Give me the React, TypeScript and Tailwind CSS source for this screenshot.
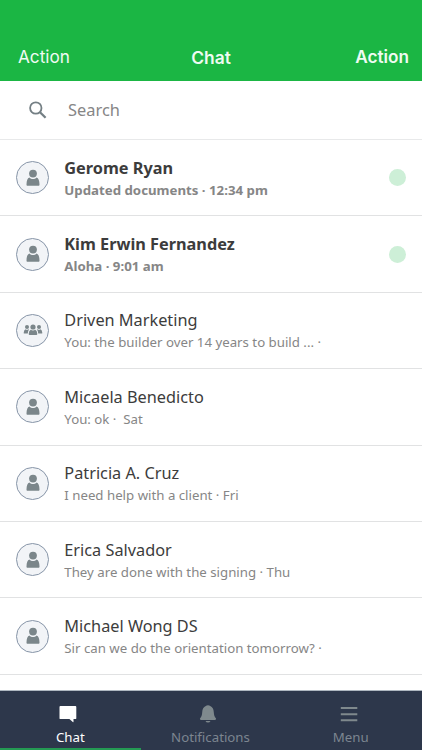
import clsx from "clsx";

interface Conversation {
  name: string;
  preview: string;
  group?: boolean;
  unread?: boolean;
}

const conversations: Conversation[] = [
  { name: "Gerome Ryan", preview: "Updated documents · 12:34 pm", unread: true },
  { name: "Kim Erwin Fernandez", preview: "Aloha · 9:01 am", unread: true },
  {
    name: "Driven Marketing",
    preview: "You: the builder over 14 years to build ... ·",
    group: true,
  },
  { name: "Micaela Benedicto", preview: "You: ok ·  Sat" },
  { name: "Patricia A. Cruz", preview: "I need help with a client · Fri" },
  { name: "Erica Salvador", preview: "They are done with the signing · Thu" },
  { name: "Michael Wong DS", preview: "Sir can we do the orientation tomorrow? ·" },
];

function PersonIcon() {
  return (
    <svg width="14" height="18" viewBox="0 0 14 18" fill="#7b868a">
      <circle cx="7" cy="4.600" r="3.900" />
      <path d="M3.400 8.400C4.500 9.600 5.600 10 7 10s2.500-.4 3.600-1.600c1.900.7 2.800 3.100 2.900 7 0 1-.4 1.400-1.200 1.400H1.700c-.8 0-1.200-.4-1.200-1.400.1-3.900 1-6.300 2.900-7z" />
    </svg>
  );
}

function GroupIcon() {
  return (
    <svg width="20" height="12" viewBox="0 0 20 12" fill="#7b868a">
      <circle cx="4" cy="3" r="2" />
      <circle cx="16" cy="3" r="2" />
      <path d="M2.400 5.300Q4 6.400 5.600 5.300L6 5.600Q4.900 7 4.800 9.600H1.400Q.6 9.600.7 8.700 .9 6 2.400 5.300z" />
      <path d="M17.600 5.300Q16 6.400 14.400 5.300L14 5.600Q15.100 7 15.200 9.600H18.600Q19.400 9.600 19.300 8.700 19.100 6 17.600 5.300z" />
      <circle cx="10" cy="3" r="2.600" />
      <path d="M7.700 5.800Q10 7.400 12.300 5.800 14.200 6.600 14.300 9.900 14.300 11 13.300 11H6.700Q5.700 11 5.700 9.900 5.800 6.600 7.700 5.800z" />
    </svg>
  );
}

function SearchIcon() {
  return (
    <svg width="18" height="18" viewBox="0 0 18 18" fill="none" stroke="#747f84">
      <circle cx="6.800" cy="7" r="5.700" strokeWidth="1.800" />
      <path d="M11 11.200l5.600 5.500" strokeWidth="2.300" />
    </svg>
  );
}

function ChatIcon() {
  return (
    <svg width="18" height="18" viewBox="0 0 18 18" fill="#fff">
      <path d="M1.400 1h15q.9 0 .9.900v11.300q0 .9-.9.900h-1.900v2.600q0 .8-.7.300l-3.400-2.900h-9q-.9 0-.9-.9V1.900q0-.9.900-.9z" />
    </svg>
  );
}

function BellIcon() {
  return (
    <svg width="18" height="18" viewBox="0 0 18 18" fill="#7f898d">
      <path d="M9 .3c1 0 1.700.3 2.200.8 2.300.9 3.400 3 3.600 6.100.2 3 .7 4.300 1.900 5.700.8.900.3 2-.9 2H2.200c-1.200 0-1.700-1.100-.9-2 1.200-1.400 1.700-2.700 1.900-5.700.2-3.100 1.300-5.200 3.600-6.100C7.300.6 8 .3 9 .3z" />
      <path d="M6.500 16h5q-.7 1.600-2.500 1.600T6.500 16z" />
    </svg>
  );
}

function MenuIcon() {
  return (
    <svg width="18" height="18" viewBox="0 0 18 18" stroke="#7f898d" strokeWidth="1.900">
      <path d="M.8 3h16.500M.8 9.200h16.500M.8 15.300h16.500" />
    </svg>
  );
}

function ConversationRow({ name, preview, group, unread }: Conversation) {
  return (
    <li className="flex h-[76.4px] items-center border-b border-[#e1e2e3] px-4">
      <div className="flex size-[33px] shrink-0 items-center justify-center rounded-full border border-[#8795a8] bg-[#f2f4f7]">
        {group ? <GroupIcon /> : <PersonIcon />}
      </div>
      <div className="ml-[15.300px] min-w-0 flex-1 pt-[2px]">
        <p
          className={clsx(
            "text-[16.300px] leading-[22px] whitespace-pre text-[#3c3c3c]",
            unread && "font-bold"
          )}
        >
          {name}
        </p>
        <p
          className={clsx(
            "text-[13.250px] leading-[22px] whitespace-pre text-[#868686]",
            unread && "font-bold"
          )}
        >
          {preview}
        </p>
      </div>
      {unread && <span className="size-[17px] rounded-full bg-[#cdefd7]" />}
    </li>
  );
}

export default function App() {
  return (
    <div className="flex h-[750px] w-[422px] flex-col overflow-hidden bg-white font-['Noto_Sans',sans-serif]">
      <header className="grid h-[81px] shrink-0 grid-cols-3 items-end bg-[#1bb644] pb-3 font-['Inter',sans-serif] text-[17.200px] leading-6 text-[#effbf2]">
        <span className="pl-[18px]">Action</span>
        <span className="-mb-px text-center text-[17.400px] font-semibold">Chat</span>
        <span className="pr-[13px] text-right font-semibold">Action</span>
      </header>

      <div className="flex h-[59px] shrink-0 items-center border-b border-[#e8e9ea] pl-[29px]">
        <SearchIcon />
        <span className="ml-[21px] text-[16.400px] leading-6 text-[#868686]">Search</span>
      </div>

      <ul className="min-h-0 flex-1 overflow-hidden">
        {conversations.map((conversation) => (
          <ConversationRow key={conversation.name} {...conversation} />
        ))}
      </ul>

      <nav className="grid h-[60px] shrink-0 grid-cols-3 border-t border-[#aeb7c0] bg-[#2d374b] text-[13.250px] leading-[18px] text-[#7c8590]">
        <div className="flex flex-col items-center border-b-2 border-[#249a53] pt-3.5 text-white">
          <div className="pr-1">
            <ChatIcon />
          </div>
          <span className="mt-[5px]">Chat</span>
        </div>
        <div className="flex flex-col items-center pt-3.5 pr-px">
          <div className="pr-[5px]">
            <BellIcon />
          </div>
          <span className="mt-[5px]">Notifications</span>
        </div>
        <div className="flex flex-col items-center pt-3.5 pr-[2px]">
          <div className="pr-1">
            <MenuIcon />
          </div>
          <span className="mt-[5px]">Menu</span>
        </div>
      </nav>
    </div>
  );
}
